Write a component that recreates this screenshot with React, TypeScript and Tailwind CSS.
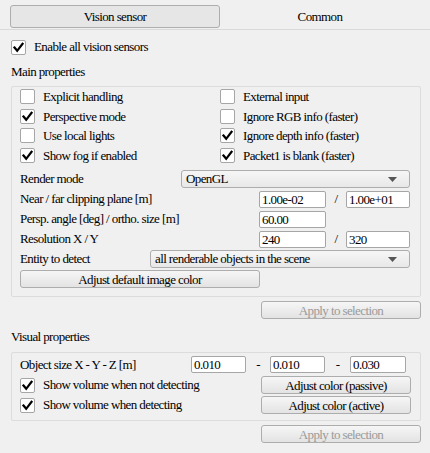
import React from 'react';

const Check = ({ checked }: { checked?: boolean }) => (
  <div className="w-[15px] h-[15px] shrink-0 bg-white border border-[#a6a6a6] rounded-[2px] flex items-center justify-center">
    {checked && (
      <svg width="11" height="11" viewBox="0 0 11 11">
        <path d="M1.5 5.5 L4.2 8.8 L9.5 1.8" fill="none" stroke="#000" strokeWidth="2.2" strokeLinecap="square" />
      </svg>
    )}
  </div>
);

const CheckRow = ({ checked, label, className = '' }: { checked?: boolean; label: string; className?: string }) => (
  <div className={`flex items-center gap-[8px] ${className}`}>
    <Check checked={checked} />
    <span className="whitespace-nowrap">{label}</span>
  </div>
);

const Input = ({ value, w }: { value: string; w: string }) => (
  <div className={`${w} h-[17px] shrink-0 bg-white border border-[#a6a6a6] rounded-[2px] pl-[2px] leading-[15px] tracking-[-0.6px]`}>
    {value}
  </div>
);

const Button = ({ label, w, disabled }: { label: string; w: string; disabled?: boolean }) => (
  <div
    className={`${w} h-[18px] shrink-0 border border-[#adadad] rounded-[3px] bg-gradient-to-b from-[#f6f6f6] to-[#e3e3e3] flex items-center justify-center leading-none ${
      disabled ? 'text-[#9a9a9a]' : 'text-black'
    }`}
  >
    {label}
  </div>
);

const Combo = ({ value, w }: { value: string; w: string }) => (
  <div className={`${w} h-[18px] shrink-0 border border-[#adadad] rounded-[3px] bg-gradient-to-b from-[#f6f6f6] to-[#e8e8e8] flex items-center pl-[4px] pr-[12px]`}>
    <span className="flex-1 whitespace-nowrap">{value}</span>
    <svg width="9" height="5" viewBox="0 0 9 5">
      <path d="M0 0 H9 L4.5 5 Z" fill="#555" />
    </svg>
  </div>
);

const Slash = ({ w }: { w: string }) => <div className={`${w} shrink-0 text-center`}>/</div>;
const Dash = ({ w }: { w: string }) => <div className={`${w} shrink-0 text-center`}>-</div>;

export default function App() {
  return (
    <div className="w-[430px] h-[453px] bg-[#f0f0f0] text-black text-[13px] tracking-[-0.6px] overflow-hidden font-[family-name:'Liberation_Serif','DejaVu_Serif',serif]">
      {/* tabs */}
      <div className="flex px-[10px] pt-[5px] h-[30px] border-b border-[#d9d9d9]">
        <div className="w-[210px] h-[23px] border border-[#adadad] rounded-[3px] bg-[#e6e6e6] flex items-center justify-center">
          Vision sensor
        </div>
        <div className="flex-1 h-[23px] flex items-center justify-center">Common</div>
      </div>

      <div className="px-[11px]">
        <CheckRow checked label="Enable all vision sensors" className="mt-[9px] h-[16px]" />
        <div className="mt-[10px] h-[14px] leading-[14px]">Main properties</div>

        {/* main group */}
        <div className="mt-[7px] w-[410px] border border-[#dcdcdc] rounded-[2px] pl-[8px] pr-[9px] pb-[7px]">
          <div className="grid grid-cols-[200px_1fr] auto-rows-[19.5px] items-center">
            <CheckRow label="Explicit handling" />
            <CheckRow label="External input" />
            <CheckRow checked label="Perspective mode" />
            <CheckRow label="Ignore RGB info (faster)" />
            <CheckRow label="Use local lights" />
            <CheckRow checked label="Ignore depth  info (faster)" />
            <CheckRow checked label="Show fog if enabled" />
            <CheckRow checked label="Packet1 is blank (faster)" />
          </div>
          <div className="mt-[4px] flex flex-col">
            <div className="h-[20px] flex items-center">
              <div className="w-[161px] shrink-0">Render mode</div>
              <Combo value="OpenGL" w="w-[229px]" />
            </div>
            <div className="h-[20px] flex items-center">
              <div className="w-[239px] shrink-0">Near / far clipping plane [m]</div>
              <Input value="1.00e-02" w="w-[67px]" />
              <Slash w="w-[20px]" />
              <Input value="1.00e+01" w="w-[64px]" />
            </div>
            <div className="h-[20px] flex items-center">
              <div className="w-[239px] shrink-0">Persp. angle [deg] / ortho. size [m]</div>
              <Input value="60.00" w="w-[67px]" />
            </div>
            <div className="h-[20px] flex items-center">
              <div className="w-[239px] shrink-0">Resolution X / Y</div>
              <Input value="240" w="w-[67px]" />
              <Slash w="w-[20px]" />
              <Input value="320" w="w-[64px]" />
            </div>
            <div className="h-[20px] flex items-center">
              <div className="w-[130px] shrink-0">Entity to detect</div>
              <Combo value="all renderable objects in the scene" w="w-[260px]" />
            </div>
            <div className="h-[20px] flex items-center">
              <Button label="Adjust default image color" w="w-[240px]" />
            </div>
          </div>
        </div>

        <div className="mt-[4px] w-[410px] flex justify-end">
          <Button label="Apply to selection" w="w-[160px]" disabled />
        </div>

        <div className="mt-[11px] h-[14px] leading-[14px]">Visual properties</div>

        {/* visual group */}
        <div className="mt-[8px] w-[410px] border border-[#dcdcdc] rounded-[2px] pl-[8px] pr-[9px] pt-[1px] pb-[5px]">
          <div className="h-[21px] flex items-center">
            <div className="w-[171px] shrink-0">Object size X - Y - Z [m]</div>
            <Input value="0.010" w="w-[55px]" />
            <Dash w="w-[24px]" />
            <Input value="0.010" w="w-[55px]" />
            <Dash w="w-[25px]" />
            <Input value="0.030" w="w-[56px]" />
          </div>
          <div className="h-[20px] flex items-center justify-between">
            <CheckRow checked label="Show volume when not detecting" />
            <Button label="Adjust color (passive)" w="w-[150px]" />
          </div>
          <div className="h-[20px] flex items-center justify-between">
            <CheckRow checked label="Show volume when detecting" />
            <Button label="Adjust color (active)" w="w-[150px]" />
          </div>
        </div>

        <div className="mt-[4px] w-[410px] flex justify-end">
          <Button label="Apply to selection" w="w-[160px]" disabled />
        </div>
      </div>
    </div>
  );
}
